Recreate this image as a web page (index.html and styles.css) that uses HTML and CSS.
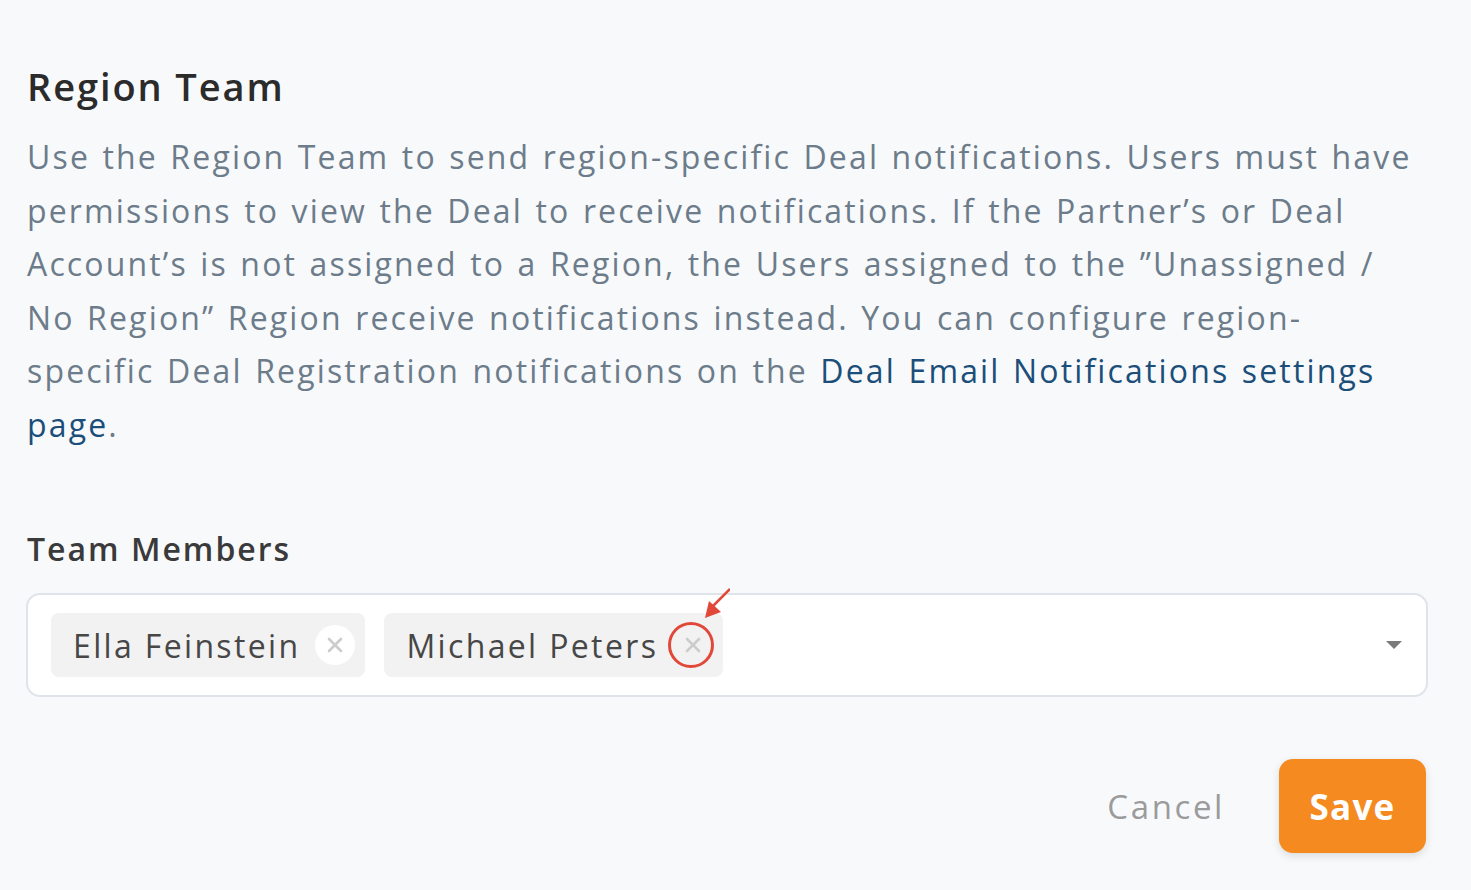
FILE: index.html
```html
<!DOCTYPE html>
<html>
<head>
<meta charset="utf-8">
<link rel="stylesheet" href="styles.css">
</head>
<body>
<div class="page">
  <h1 class="title">Region Team</h1>
  <p class="desc">Use the Region Team to send region-specific Deal notifications. Users must have<br>permissions to view the Deal to receive notifications. If the Partner’s or Deal<br>Account’s is not assigned to a Region, the Users assigned to the ”Unassigned /<br>No Region” Region receive notifications instead. You can configure region-<br>specific Deal Registration notifications on the <a class="link" href="#">Deal Email Notifications settings<br>page</a>.</p>
  <div class="label">Team Members</div>
  <div class="select">
    <div class="chip"><span class="chip-name">Ella Feinstein</span><span class="chip-x"><svg width="18" height="18" viewBox="0 0 18 18"><path d="M3 3L15 15M15 3L3 15" stroke="#cccccc" stroke-width="2.6" stroke-linecap="round"/></svg></span></div>
    <div class="chip"><span class="chip-name">Michael Peters</span><span class="chip-x plain"><svg width="18" height="18" viewBox="0 0 18 18"><path d="M3 3L15 15M15 3L3 15" stroke="#cccccc" stroke-width="2.6" stroke-linecap="round"/></svg></span></div>
    <div class="spacer"></div>
    <svg class="caret" width="16" height="9" viewBox="0 0 16 9"><path d="M0 0H16L8 8Z" fill="#7a7a7a"/></svg>
  </div>
  <div class="footer">
    <button class="cancel">Cancel</button>
    <button class="save">Save</button>
  </div>
  <svg class="annot" width="80" height="90" viewBox="0 0 80 90">
    <circle cx="41" cy="64" r="21.5" fill="none" stroke="#e2483a" stroke-width="3"/>
    <path d="M80 8L63 25" stroke="#e2483a" stroke-width="2.5"/>
    <path d="M55 37L59 20L71 31Z" fill="#e2483a"/>
  </svg>
</div>
</body>
</html>
```
FILE: styles.css
```css
html, body {
  margin: 0;
  background: #f8f9fb;
}
body {
  font-family: "Open Sans", "Noto Sans", sans-serif;
  width: 1471px;
  height: 890px;
  overflow: hidden;
}
.page {
  position: relative;
  padding: 61px 45px 0 27px;
}
.title {
  margin: 0;
  font-size: 38px;
  line-height: 50px;
  font-weight: 600;
  color: #2b2b2b;
  letter-spacing: 1.9px;
}
.desc {
  margin: 19px 0 0 0;
  font-size: 32px;
  line-height: 53.5px;
  color: #6c7c8a;
  white-space: nowrap;
  letter-spacing: 2.15px;
  word-spacing: 2px;
}
.link {
  color: #1b4f7a;
  text-decoration: none;
}
.label {
  margin-top: 78px;
  font-size: 32px;
  line-height: 40px;
  font-weight: 600;
  color: #3a3a3a;
  letter-spacing: 2px;
}
.select {
  margin-top: 24px;
  height: 100px;
  border: 2px solid #dfe4ea;
  border-radius: 14px;
  background: #fff;
  display: flex;
  align-items: center;
  padding: 0 24px 0 23px;
  box-sizing: content-box;
  gap: 19px;
  margin-left: -1px;
  width: 1351px;
}
.chip {
  height: 64px;
  background: #f2f2f2;
  border-radius: 8px;
  display: flex;
  align-items: center;
  padding: 0 10px 0 22px;
  gap: 15px;
}
.chip-name {
  font-size: 32px;
  color: #474747;
  letter-spacing: 2.35px;
}
.chip-x {
  width: 40px;
  height: 40px;
  border-radius: 50%;
  background: #fff;
  display: flex;
  align-items: center;
  justify-content: center;
}
.chip-x.plain {
  background: transparent;
}
.spacer {
  flex: 1;
}
.caret {
  display: block;
}
.footer {
  display: flex;
  justify-content: flex-end;
  align-items: center;
  gap: 54px;
  margin-top: 62px;
}
.cancel {
  background: none;
  border: none;
  font-family: inherit;
  font-size: 33px;
  color: #9b9b9b;
  padding: 0;
  letter-spacing: 2.6px;
}
.save {
  width: 147px;
  height: 94px;
  border: none;
  border-radius: 14px;
  background: #f48a20;
  color: #fff;
  font-family: inherit;
  font-size: 35px;
  font-weight: 700;
  letter-spacing: 1.2px;
  box-shadow: 0 3px 8px rgba(0,0,0,0.12);
}
.annot {
  position: absolute;
  left: 650px;
  top: 581px;
}
```
